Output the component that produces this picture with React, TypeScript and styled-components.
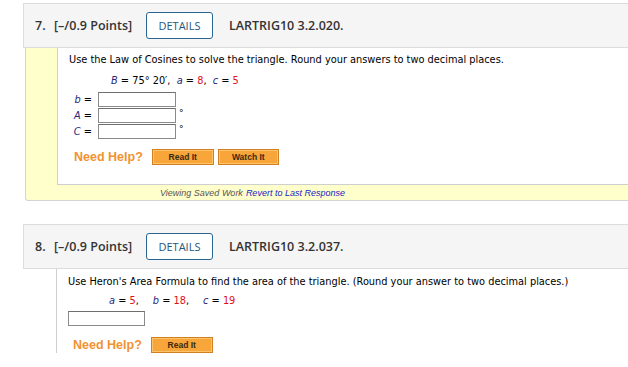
import React from "react";
import styled, { createGlobalStyle } from "styled-components";

const Global = createGlobalStyle`
  html, body { margin: 0; padding: 0; background: #fff; }
  body { font-family: "DejaVu Sans", Verdana, sans-serif; color: #000; }
`;

const Page = styled.div`
  width: 628px;
  height: 367px;
  overflow: hidden;
  padding: 3px 0 0 23px;
  box-sizing: border-box;
`;

const Question = styled.section<{ $gap?: number }>`
  width: 620px;
  margin-bottom: ${(p) => p.$gap ?? 0}px;
`;

const Header = styled.div`
  height: 43px;
  background: #f5f5f5;
  border: 1px solid #dcdcdc;
  border-right: none;
  display: flex;
  align-items: center;
  font-family: "Open Sans", sans-serif;
  color: #333;
`;

const Num = styled.span`
  font-size: 12.5px;
  font-weight: 600;
  margin-left: 11px;
  width: 19px;
`;

const Points = styled.span`
  font-size: 12.5px;
  font-weight: 600;
  width: 92px;
`;

const DetailsBtn = styled.button`
  height: 27px;
  width: 67px;
  box-sizing: border-box;
  border: 1px solid #2b6592;
  border-radius: 3px;
  background: #fff;
  color: #245680;
  font-family: "Open Sans", sans-serif;
  font-size: 11px;
  padding: 0;
  margin-right: 16px;
`;

const Code = styled.span`
  font-size: 12.5px;
  font-weight: 600;
`;

const Body = styled.div<{ $saved?: boolean }>`
  margin-left: 2px;
  padding-left: 31px;
  background: ${(p) => (p.$saved ? "#ffffcc" : "#fff")};
  border-left: ${(p) => (p.$saved ? "1px solid #d4d4d4" : "none")};
  border-bottom: ${(p) => (p.$saved ? "1px solid #d4d4d4" : "none")};
  border-bottom-left-radius: 3px;
`;

const Panel = styled.div<{ $bottom?: boolean; $top: number }>`
  background: #fff;
  border-left: 1px solid #cfcfcf;
  border-bottom: ${(p) => (p.$bottom ? "1px solid #cfcfcf" : "none")};
  padding: ${(p) => p.$top}px 0 0 11px;
  font-size: 9.8px;
  line-height: 13px;
`;

const Prompt = styled.p<{ $after: number }>`
  margin: 0 0 ${(p) => p.$after}px;
`;

const Equation = styled.div<{ $indent: number }>`
  padding-left: ${(p) => p.$indent}px;
  margin-bottom: 4px;
`;

const Var = styled.i`
  color: #26267a;
`;

const Val = styled.span`
  color: #e0101a;
`;

const Term = styled.span<{ $gap: number }>`
  margin-right: ${(p) => p.$gap}px;
`;

const AnswerRow = styled.div`
  display: flex;
  align-items: center;
  height: 16px;
`;

const Label = styled.span`
  width: 29px;
  text-align: right;
  padding-right: 6px;
  box-sizing: border-box;
`;

const Input = styled.div<{ $w: number }>`
  width: ${(p) => p.$w}px;
  height: 15px;
  box-sizing: border-box;
  border: 1px solid #8a8a8a;
  border-top-color: #6f6f6f;
  background: #fff;
`;

const Degree = styled.span`
  margin-left: 3px;
  font-size: 9px;
  position: relative;
  top: -2px;
`;

const HelpRow = styled.div<{ $top: number; $bottom: number }>`
  display: flex;
  align-items: center;
  margin: ${(p) => p.$top}px 0 ${(p) => p.$bottom}px 5px;
  gap: 4px;
`;

const NeedHelp = styled.span`
  font-family: "Liberation Sans", Arial, sans-serif;
  font-weight: bold;
  font-size: 12.5px;
  color: #f29230;
  margin-right: 5px;
`;

const HelpBtn = styled.button<{ $w: number }>`
  width: ${(p) => p.$w}px;
  height: 16px;
  box-sizing: border-box;
  padding: 0;
  border: 1px solid #d07f22;
  box-shadow: inset 0 0 0 1px #fbc46a;
  background: #f8a53a;
  font-family: "Liberation Sans", Arial, sans-serif;
  font-weight: bold;
  font-size: 8.5px;
  color: #3a2a10;
  line-height: 14px;
`;

const SavedBar = styled.div`
  height: 15px;
  padding-left: 103px;
  display: flex;
  align-items: center;
  font-family: "Liberation Sans", Arial, sans-serif;
  font-style: italic;
  font-size: 9px;
  color: #555;
`;

const Revert = styled.span`
  color: #2020c8;
  margin-left: 3px;
`;

export default function App() {
  return (
    <>
      <Global />
      <Page>
        <Question $gap={23}>
          <Header>
            <Num>7.</Num>
            <Points>[–/0.9 Points]</Points>
            <DetailsBtn>DETAILS</DetailsBtn>
            <Code>LARTRIG10 3.2.020.</Code>
          </Header>
          <Body $saved>
            <Panel $bottom $top={5}>
              <Prompt $after={8}>Use the Law of Cosines to solve the triangle. Round your answers to two decimal places.</Prompt>
              <Equation $indent={42}>
                <Var>B</Var> = 75° 20′, &nbsp;<Var>a</Var> = <Val>8</Val>, &nbsp;<Var>c</Var> = <Val>5</Val>
              </Equation>
              <AnswerRow>
                <Label><Var>b</Var> =</Label>
                <Input $w={78} />
              </AnswerRow>
              <AnswerRow>
                <Label><Var>A</Var> =</Label>
                <Input $w={78} />
                <Degree>°</Degree>
              </AnswerRow>
              <AnswerRow>
                <Label><Var>C</Var> =</Label>
                <Input $w={78} />
                <Degree>°</Degree>
              </AnswerRow>
              <HelpRow $top={10} $bottom={19}>
                <NeedHelp>Need Help?</NeedHelp>
                <HelpBtn $w={62}>Read It</HelpBtn>
                <HelpBtn $w={61}>Watch It</HelpBtn>
              </HelpRow>
            </Panel>
            <SavedBar>
              Viewing Saved Work<Revert>Revert to Last Response</Revert>
            </SavedBar>
          </Body>
        </Question>
        <Question>
          <Header>
            <Num>8.</Num>
            <Points>[–/0.9 Points]</Points>
            <DetailsBtn>DETAILS</DetailsBtn>
            <Code>LARTRIG10 3.2.037.</Code>
          </Header>
          <Body>
            <Panel $top={6}>
              <Prompt $after={6}>Use Heron's Area Formula to find the area of the triangle. (Round your answer to two decimal places.)</Prompt>
              <Equation $indent={41}>
                <Term $gap={14}><Var>a</Var> = <Val>5</Val>,</Term>
                <Term $gap={14}><Var>b</Var> = <Val>18</Val>,</Term>
                <Term $gap={0}><Var>c</Var> = <Val>19</Val></Term>
              </Equation>
              <Input $w={77} />
              <HelpRow $top={11} $bottom={20}>
                <NeedHelp>Need Help?</NeedHelp>
                <HelpBtn $w={62}>Read It</HelpBtn>
              </HelpRow>
            </Panel>
          </Body>
        </Question>
      </Page>
    </>
  );
}
